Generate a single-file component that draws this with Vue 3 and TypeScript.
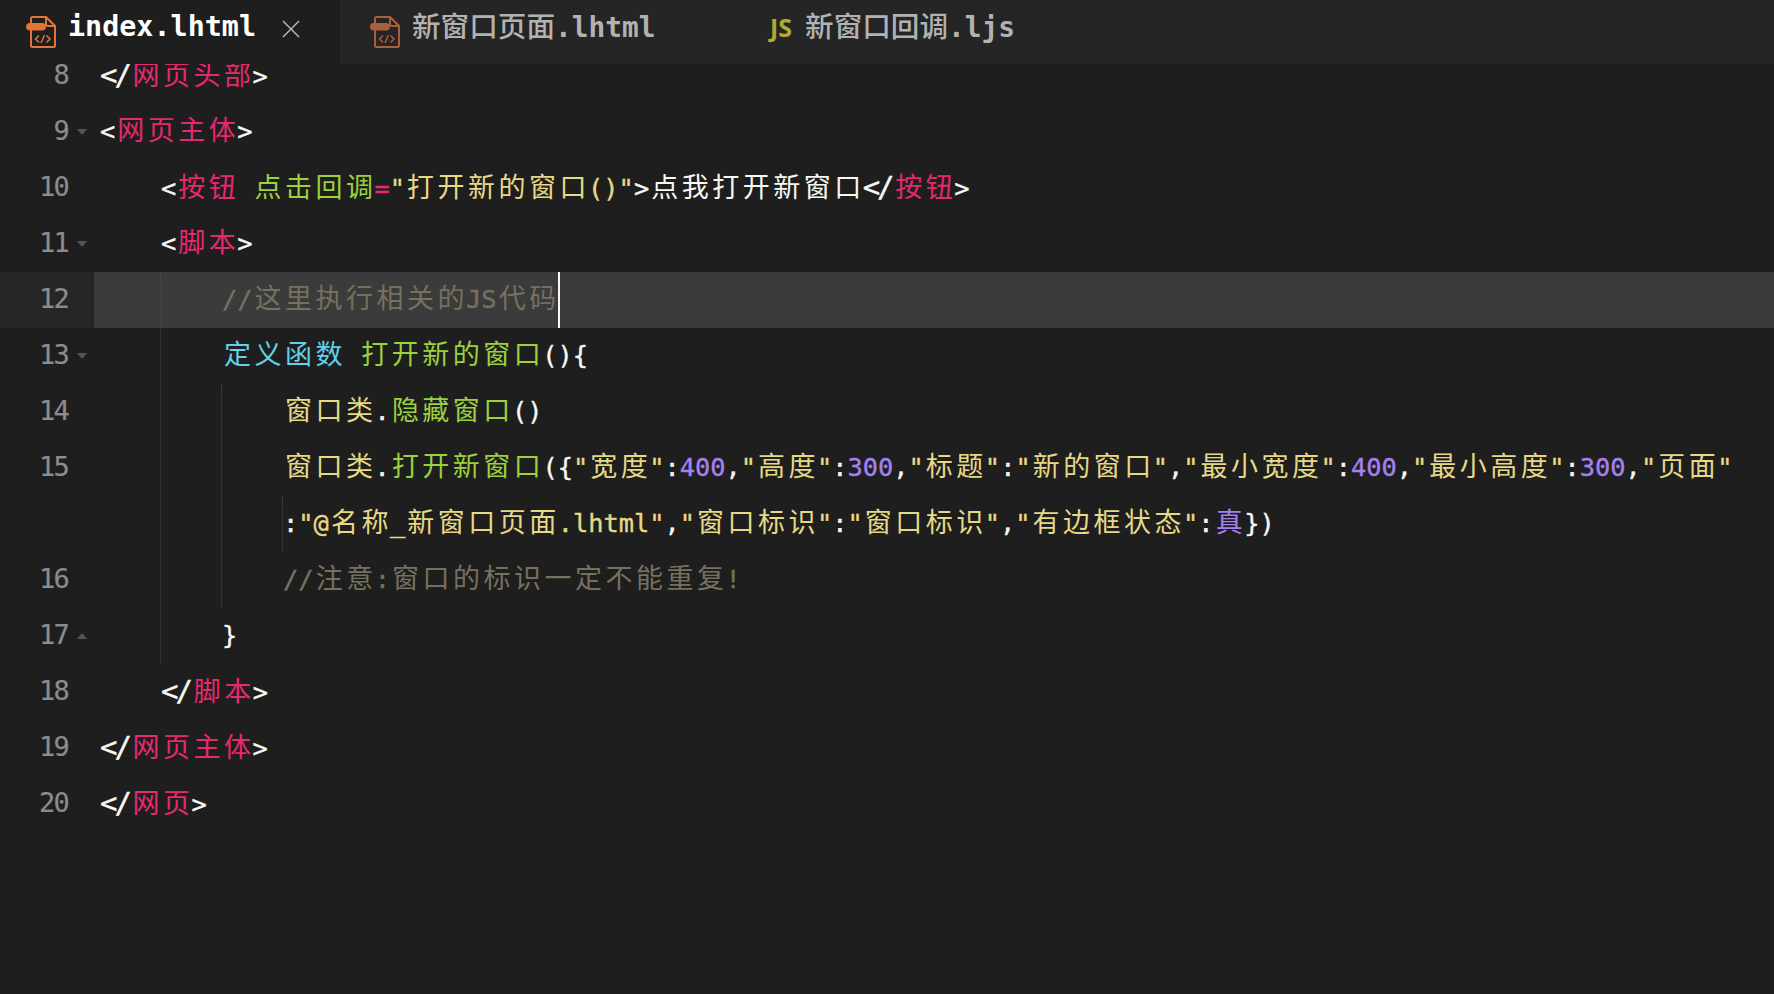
<script setup lang="ts">
type Token = [string, string]
interface Line {
  n: number | null
  fold?: 'down' | 'up'
  active?: boolean
  caret?: boolean
  tokens: Token[]
}

const w = (t: string): Token => [t, 'white']
const p = (t: string): Token => [t, 'pink']
const g = (t: string): Token => [t, 'green']
const y = (t: string): Token => [t, 'yellow']
const c = (t: string): Token => [t, 'cyan']
const v = (t: string): Token => [t, 'purple']
const d = (t: string): Token => [t, 'comment']
const close: Token = ['</', 'white close']

const lines: Line[] = [
  { n: 8, tokens: [close, p('网页头部'), w('>')] },
  { n: 9, fold: 'down', tokens: [w('<'), p('网页主体'), w('>')] },
  { n: 10, tokens: [w('    <'), p('按钮'), w(' '), g('点击回调'), p('='), y('"打开新的窗口()"'), w('>点我打开新窗口'), close, p('按钮'), w('>')] },
  { n: 11, fold: 'down', tokens: [w('    <'), p('脚本'), w('>')] },
  { n: 12, active: true, caret: true, tokens: [w('        '), d('//这里执行相关的JS代码')] },
  { n: 13, fold: 'down', tokens: [w('        '), c('定义函数'), w(' '), g('打开新的窗口'), w('(){')] },
  { n: 14, tokens: [w('            '), y('窗口类'), w('.'), g('隐藏窗口'), w('()')] },
  { n: 15, tokens: [w('            '), y('窗口类'), w('.'), g('打开新窗口'), w('({'), y('"宽度"'), w(':'), v('400'), w(','), y('"高度"'), w(':'), v('300'), w(','), y('"标题"'), w(':'), y('"新的窗口"'), w(','), y('"最小宽度"'), w(':'), v('400'), w(','), y('"最小高度"'), w(':'), v('300'), w(','), y('"页面"')] },
  { n: null, tokens: [w('            :'), y('"@名称_新窗口页面.lhtml"'), w(','), y('"窗口标识"'), w(':'), y('"窗口标识"'), w(','), y('"有边框状态"'), w(':'), v('真'), w('})')] },
  { n: 16, tokens: [w('            '), d('//注意:窗口的标识一定不能重复!')] },
  { n: 17, fold: 'up', tokens: [w('        }')] },
  { n: 18, tokens: [w('    '), close, p('脚本'), w('>')] },
  { n: 19, tokens: [close, p('网页主体'), w('>')] },
  { n: 20, tokens: [close, p('网页'), w('>')] },
]

const guides = [
  { x: 160, top: 224, height: 392 },
  { x: 221, top: 336, height: 224 },
  { x: 282, top: 448, height: 56 },
]

function segments(text: string): { text: string; cjk: boolean }[] {
  const parts = text.match(/[\u2E80-\u9FFF]+|[^\u2E80-\u9FFF]+/g) ?? []
  return parts.map((part) => ({ text: part, cjk: /[\u2E80-\u9FFF]/.test(part) }))
}
</script>

<template>
  <div class="editor">
    <div class="tabbar">
      <div class="tab tab-active">
        <svg class="file-icon" viewBox="0 0 30 32" fill="none">
          <path d="M5 7V2.5Q5 1 6.5 1H20L29 10V29.5Q29 31 27.5 31H6.5Q5 31 5 29.5V14M20 1V8Q20 10 22 10H29" stroke="currentColor" stroke-width="2" />
          <rect x="0" y="7" width="20" height="7.5" rx="3.7" fill="currentColor" />
          <path d="M13 19.5L9.5 23L13 26.5M20.5 19.5L24 23L20.5 26.5M18.5 19L15 27" stroke="currentColor" stroke-width="1.5" />
        </svg>
        <span class="tab-label">index.lhtml</span>
        <svg class="tab-close" viewBox="0 0 18 18" fill="none">
          <path d="M1 1L17 17M17 1L1 17" stroke="currentColor" stroke-width="1.4" />
        </svg>
      </div>
      <div class="tab tab-page">
        <svg class="file-icon dim" viewBox="0 0 30 32" fill="none">
          <path d="M5 7V2.5Q5 1 6.5 1H20L29 10V29.5Q29 31 27.5 31H6.5Q5 31 5 29.5V14M20 1V8Q20 10 22 10H29" stroke="currentColor" stroke-width="2" />
          <rect x="0" y="7" width="20" height="7.5" rx="3.7" fill="currentColor" />
          <path d="M13 19.5L9.5 23L13 26.5M20.5 19.5L24 23L20.5 26.5M18.5 19L15 27" stroke="currentColor" stroke-width="1.5" />
        </svg>
        <span class="tab-label"><span class="tab-cjk">新窗口页面</span>.lhtml</span>
      </div>
      <div class="tab tab-script">
        <span class="js-badge">JS</span>
        <span class="tab-label"><span class="tab-cjk">新窗口回调</span>.ljs</span>
      </div>
    </div>

    <div class="viewport">
      <div class="lines">
        <span
          v-for="guide in guides"
          :key="guide.x"
          class="guide"
          :style="{ left: guide.x + 'px', top: guide.top + 'px', height: guide.height + 'px' }"
        ></span>
        <div v-for="(line, index) in lines" :key="index" class="row" :class="{ active: line.active }">
          <div class="gutter">
            <span class="number">{{ line.n }}</span>
            <span v-if="line.fold" class="fold" :class="line.fold"></span>
          </div>
          <div class="code">
            <span v-for="(token, ti) in line.tokens" :key="ti" :class="token[1]">
              <span v-for="(seg, si) in segments(token[0])" :key="si" :class="seg.cjk ? 'cjk' : 'asc'">{{ seg.text }}</span>
            </span>
            <span v-if="line.caret" class="caret"></span>
          </div>
        </div>
      </div>
    </div>
  </div>
</template>

<style scoped>
.editor {
  width: 100vw;
  height: 100vh;
  display: flex;
  flex-direction: column;
  background: #1e1e1e;
  overflow: hidden;
  font-family: "DejaVu Sans Mono", "Noto Sans CJK SC", monospace;
}
.tabbar {
  flex: none;
  height: 64px;
  display: flex;
  background: #252525;
  position: relative;
  z-index: 2;
}
.tab {
  display: flex;
  align-items: center;
  font-size: 27.8px;
  font-weight: 700;
  color: #b2b2b2;
  white-space: pre;
}
.tab-active {
  width: 340px;
  padding-left: 26px;
  box-sizing: border-box;
  background: #1e1e1e;
  color: #ffffff;
  font-size: 28.4px;
}
.tab-page {
  width: 430px;
  padding-left: 30px;
  box-sizing: border-box;
}
.tab-script {
  gap: 13px;
}
.tab-label {
  line-height: 36px;
  padding-bottom: 10px;
}
.file-icon {
  width: 30px;
  height: 32px;
  flex: none;
  margin-right: 12px;
  color: #e0753a;
}
.file-icon.dim {
  color: #a8603a;
}
.tab-cjk {
  font-size: 28.6px;
  font-weight: 500;
}
.tab-close {
  width: 18px;
  height: 18px;
  margin-left: 26px;
  padding-bottom: 6px;
  color: #bdbdbd;
}
.js-badge {
  font-family: "Open Sans", sans-serif;
  font-weight: 700;
  font-size: 25px;
  line-height: 36px;
  padding-bottom: 10px;
  color: #b0aa2e;
}
.viewport {
  flex: 1;
  min-height: 0;
  overflow: hidden;
}
.lines {
  position: relative;
  margin-top: -16px;
}
.guide {
  position: absolute;
  width: 0;
  border-left: 1px dotted #484848;
  z-index: 1;
}
.row {
  display: flex;
  height: 56px;
  line-height: 54px;
  white-space: pre;
  font-size: 25.35px;
}
.gutter {
  position: relative;
  flex: none;
  width: 94px;
  box-sizing: border-box;
  padding-right: 26px;
  text-align: right;
}
.number {
  font-size: 27px;
  letter-spacing: -1.8px;
  color: #8c8c8c;
  -webkit-text-stroke: 0.2px currentColor;
}
.fold {
  position: absolute;
  left: 77px;
  width: 0;
  height: 0;
  border-left: 5px solid transparent;
  border-right: 5px solid transparent;
}
.fold.down {
  top: 25px;
  border-top: 6px solid #555555;
}
.fold.up {
  top: 25px;
  border-bottom: 6px solid #555555;
}
.code {
  flex: 1;
  padding-left: 6px;
  min-width: 0;
}
.row.active .gutter {
  background: #262626;
}
.row.active .code {
  background: #3b3b3b;
}
.cjk {
  font-size: 27px;
  letter-spacing: 3.5px;
  padding-left: 2px;
  margin-right: -2px;
}
.asc {
  -webkit-text-stroke: 0.35px currentColor;
}
.white { color: #f8f8f2; }
.pink { color: #e6296e; }
.green { color: #9bd13d; }
.yellow { color: #e6d986; }
.cyan { color: #62d0ea; }
.purple { color: #a481ee; }
.comment { color: #75715e; }
.close {
  font-size: 29px;
  letter-spacing: -3px;
  padding-right: 1.7px;
}
.caret {
  display: inline-block;
  width: 2px;
  height: 56px;
  margin-right: -2px;
  vertical-align: top;
  background: #f8f8f2;
}
</style>

<style>
html,
body {
  margin: 0;
  background: #1e1e1e;
  overflow: hidden;
}
</style>
